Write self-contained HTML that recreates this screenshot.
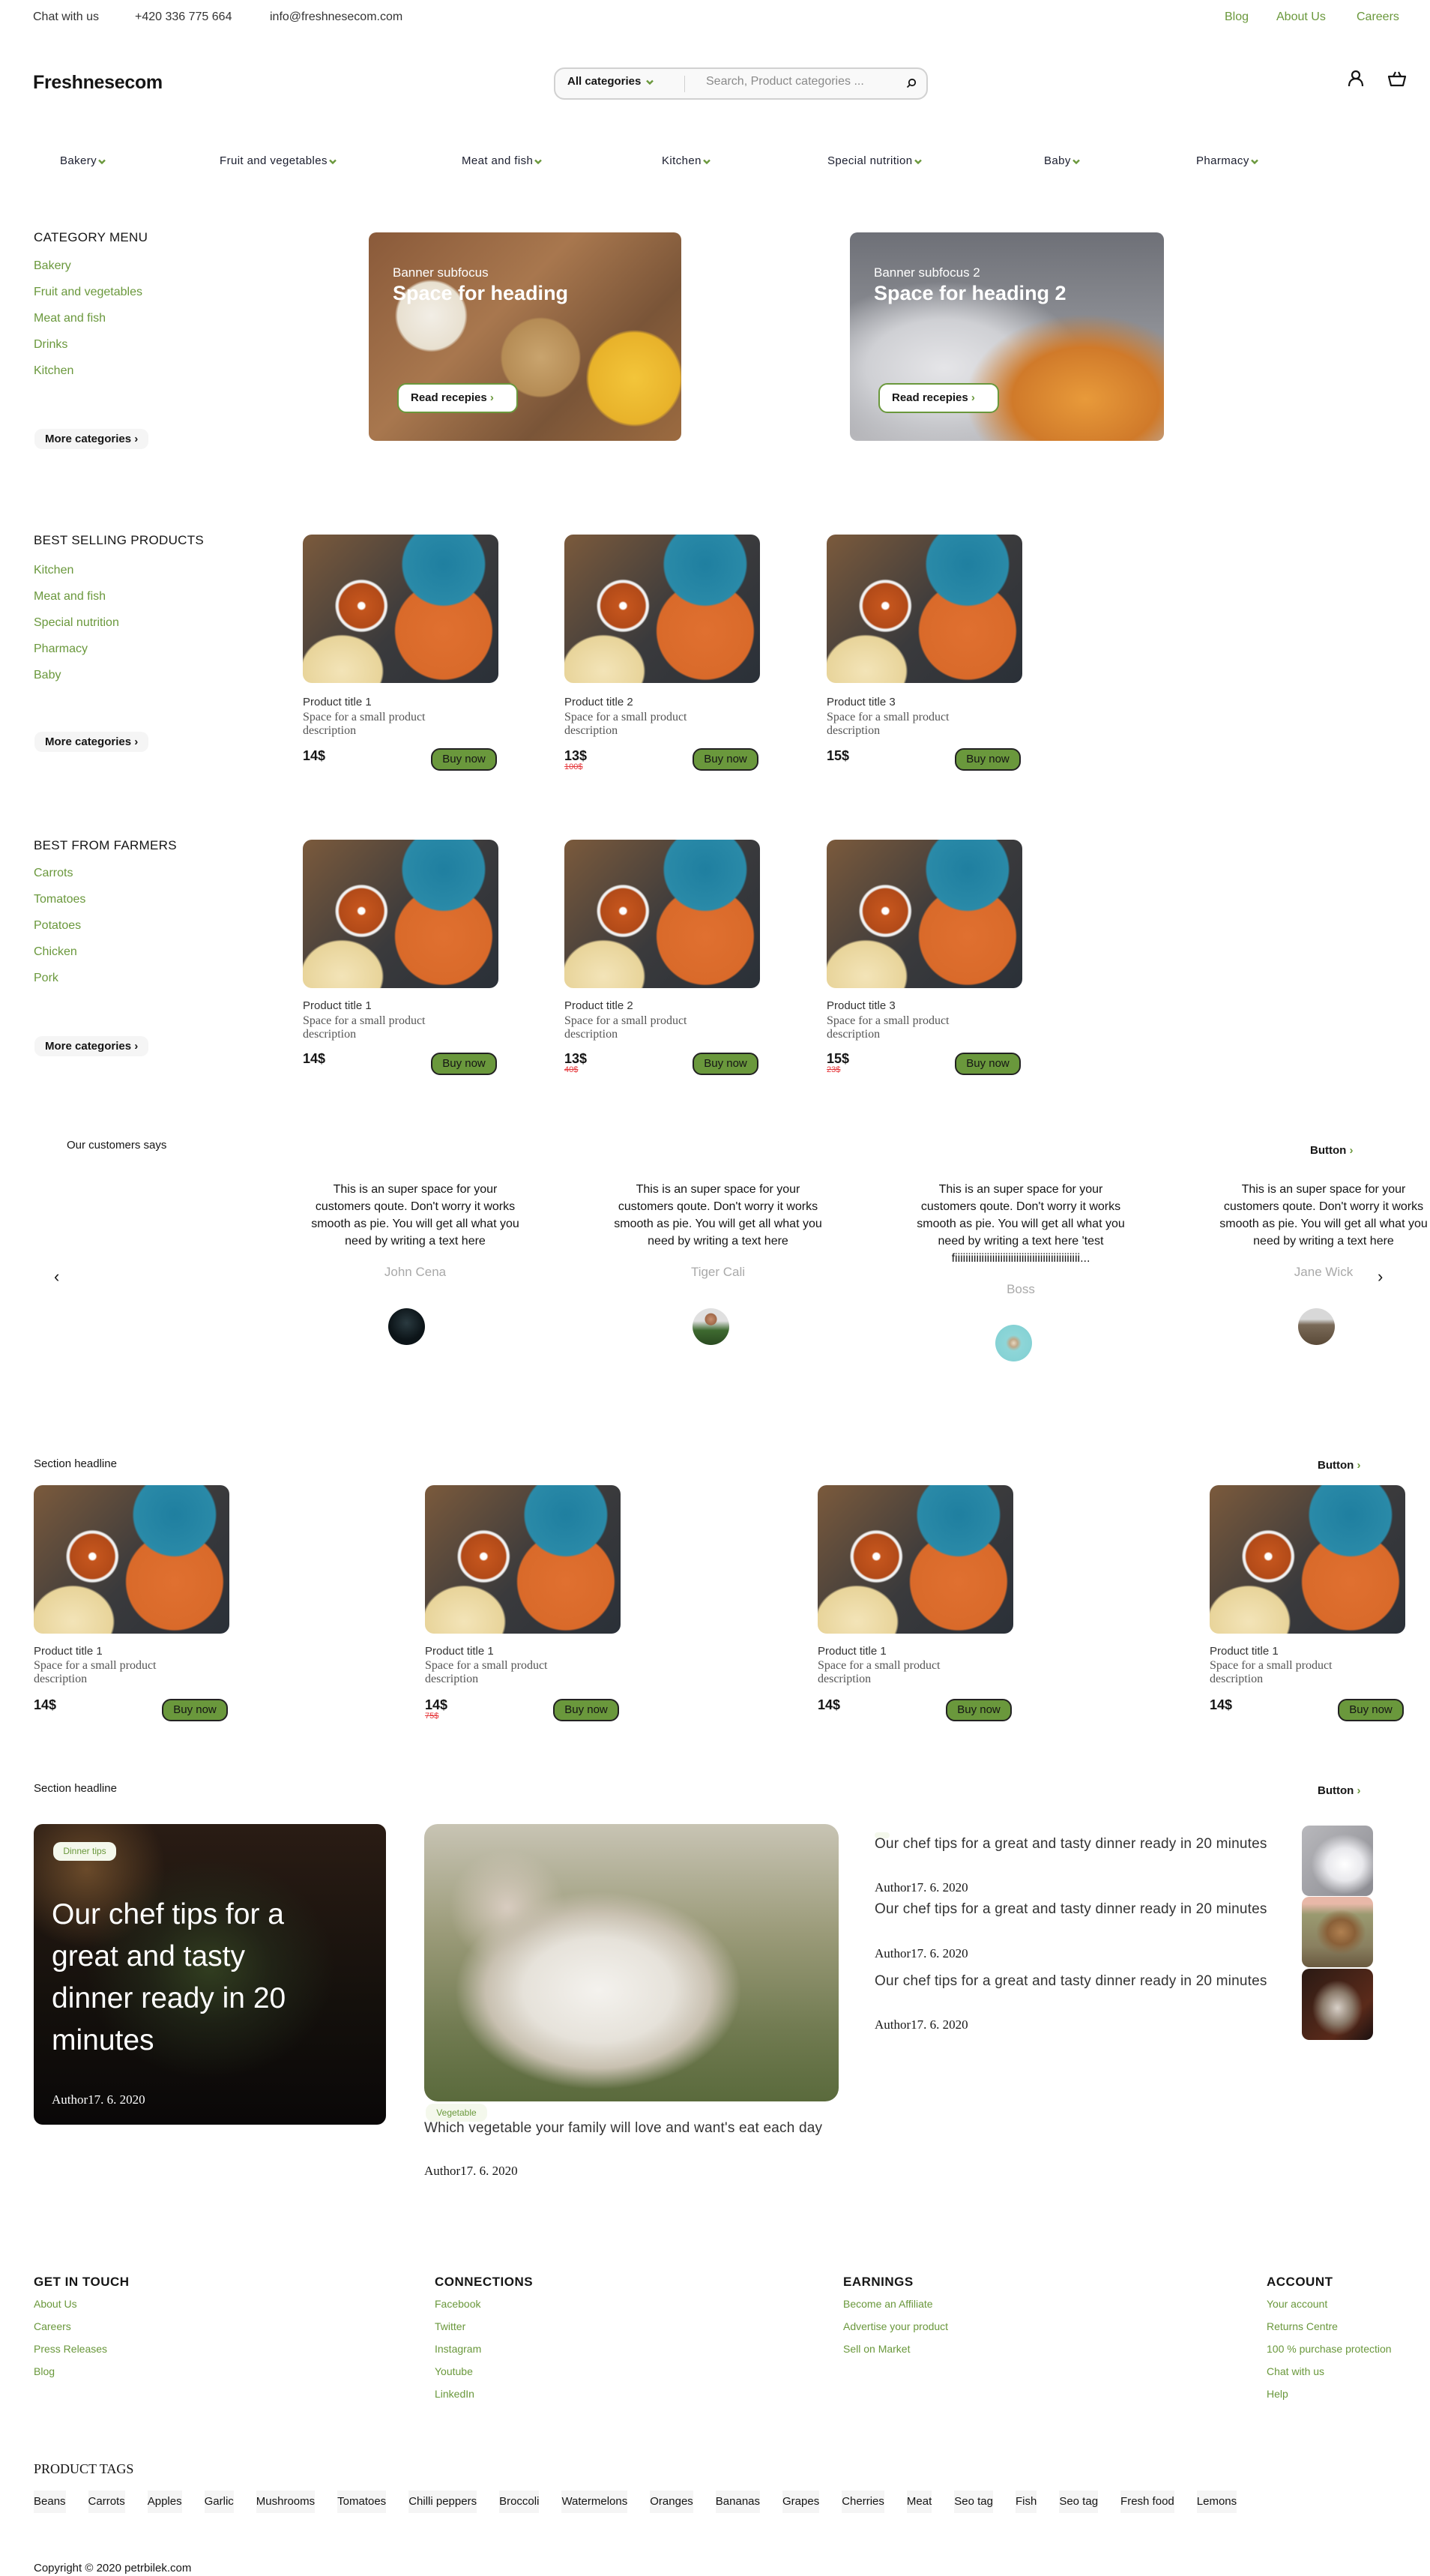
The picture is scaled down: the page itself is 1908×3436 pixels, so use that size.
<!DOCTYPE html>
<html><head><meta charset="utf-8">
<style>
*{margin:0;padding:0;box-sizing:border-box}
body{width:1908px;height:3436px;position:relative;background:#fff;font-family:"Liberation Sans",sans-serif;color:#151515;overflow:hidden}
.a{position:absolute;white-space:nowrap}
.g{color:#6a983c}
.cv{display:inline-block;width:10px;height:7px;margin-left:2px;vertical-align:middle}
.nav{font-size:15px;color:#1a1d2e;letter-spacing:.4px}
.cat{font-size:16px;color:#6a983c}
.ttl{font-size:17px;color:#151515;letter-spacing:.3px}
.more{background:#f5f5f5;border-radius:10px;font-size:15px;font-weight:bold;padding:0 14px;height:27px;line-height:27px}
.food{border-radius:12px;background:
radial-gradient(circle at 72% 20%,#1f7fa0 0,#2a8aa8 22%,transparent 23%),
radial-gradient(circle at 30% 48%,#fff 0,#fff 2%,#c4551d 3%,#b24a18 14%,#f0f0f0 15%,#f0f0f0 16%,transparent 17%),
radial-gradient(circle at 72% 65%,#e07030 0,#d96a2a 28%,transparent 29%),
radial-gradient(ellipse at 20% 92%,#f3e4b8 0,#e8d49a 18%,transparent 19%),
linear-gradient(135deg,#7b5a3c,#3a3a3c 55%,#2a3038)}
.pt{font-size:15px;color:#333}
.pd{font-family:"Liberation Serif",serif;font-size:16px;color:#555;line-height:18px;white-space:normal;width:230px}
.pr{font-size:18px;font-weight:bold}
.old{font-size:11px;color:#e5373b;text-decoration:line-through}
.buy{width:88px;height:30px;border:2px solid #222;background:#6a983c;border-radius:12px;font-size:15px;text-align:center;line-height:26px;color:#151515}
.q{font-size:16px;line-height:23px;text-align:center;width:290px;white-space:normal}
.nm{font-size:17px;color:#a9a9a9;text-align:center;width:290px}
.av{width:49px;height:49px;border-radius:50%}
.fh{font-size:17px;font-weight:bold;letter-spacing:.5px}
.fl{font-size:14px;color:#6a983c}
.tag{background:#f5f5f5;height:30px;line-height:30px;font-size:15px;color:#151515;display:inline-block;margin-right:30px}
.auth{font-family:"Liberation Serif",serif;font-size:17px}
.bt{font-size:19px;color:#333;letter-spacing:.2px}
</style></head><body>
<svg width="0" height="0" style="position:absolute"><defs><symbol id="cv" viewBox="0 0 10 7"><path d="M1 1.5L5 5.5L9 1.5" fill="none" stroke="#6a983c" stroke-width="2.4"/></symbol></defs></svg>

<div class="a" style="left:44px;top:14px;font-size:16px;color:#333">Chat with us</div>
<div class="a" style="left:180px;top:14px;font-size:16px;color:#333">+420 336 775 664</div>
<div class="a" style="left:360px;top:14px;font-size:16px;color:#333">info@freshnesecom.com</div>
<div class="a g" style="left:1634px;top:14px;font-size:16px">Blog</div>
<div class="a g" style="left:1703px;top:14px;font-size:16px">About Us</div>
<div class="a g" style="left:1810px;top:14px;font-size:16px">Careers</div>

<div class="a" style="left:44px;top:96px;font-size:25px;font-weight:bold;letter-spacing:-.3px">Freshnesecom</div>
<div class="a" style="left:739px;top:90px;width:499px;height:43px;border:2px solid #d1d1d1;border-radius:14px;background:#f9f9f9"></div>
<div class="a" style="left:757px;top:100px;font-size:15px;font-weight:bold">All categories <svg class="cv"><use href="#cv"/></svg></div>
<div class="a" style="left:913px;top:101px;width:1px;height:22px;background:#d1d1d1"></div>
<div class="a" style="left:942px;top:100px;font-size:16px;color:#8a8a8a">Search, Product categories ...</div>
<svg class="a" style="left:1209px;top:104px" width="14" height="14" viewBox="0 0 14 14"><circle cx="8" cy="6" r="4.2" fill="none" stroke="#151515" stroke-width="1.8"/><path d="M5 9L1.5 12.5" stroke="#151515" stroke-width="1.8"/></svg>
<svg class="a" style="left:1797px;top:93px" width="24" height="24" viewBox="0 0 24 24"><circle cx="12" cy="7" r="5" fill="none" stroke="#151515" stroke-width="2.2"/><path d="M3 22C3 15 7 12 12 12S21 15 21 22" fill="none" stroke="#151515" stroke-width="2.2"/></svg>
<svg class="a" style="left:1851px;top:93px" width="26" height="24" viewBox="0 0 26 24"><path d="M2 9H24L21 21H5Z" fill="none" stroke="#151515" stroke-width="2.2" stroke-linejoin="round"/><path d="M8 9L11 3M18 9L15 3" stroke="#151515" stroke-width="2.2"/></svg>

<div class="a nav" style="left:80px;top:206px">Bakery<svg class="cv"><use href="#cv"/></svg></div>
<div class="a nav" style="left:293px;top:206px">Fruit and vegetables<svg class="cv"><use href="#cv"/></svg></div>
<div class="a nav" style="left:616px;top:206px">Meat and fish<svg class="cv"><use href="#cv"/></svg></div>
<div class="a nav" style="left:883px;top:206px">Kitchen<svg class="cv"><use href="#cv"/></svg></div>
<div class="a nav" style="left:1104px;top:206px">Special nutrition<svg class="cv"><use href="#cv"/></svg></div>
<div class="a nav" style="left:1393px;top:206px">Baby<svg class="cv"><use href="#cv"/></svg></div>
<div class="a nav" style="left:1596px;top:206px">Pharmacy<svg class="cv"><use href="#cv"/></svg></div>

<div class="a ttl" style="left:45px;top:307px">CATEGORY MENU</div>
<div class="a cat" style="left:45px;top:346px">Bakery</div>
<div class="a cat" style="left:45px;top:381px">Fruit and vegetables</div>
<div class="a cat" style="left:45px;top:416px">Meat and fish</div>
<div class="a cat" style="left:45px;top:451px">Drinks</div>
<div class="a cat" style="left:45px;top:486px">Kitchen</div>
<div class="a more" style="left:46px;top:572px">More categories &#8250;</div>

<div class="a" style="left:492px;top:310px;width:417px;height:278px;border-radius:10px;background:radial-gradient(circle at 20% 40%,#f2eee6 0,#e8e0d0 12%,transparent 13%),radial-gradient(circle at 85% 70%,#f3c53a 0,#e8b22a 15%,transparent 16%),radial-gradient(circle at 55% 60%,#c9a46e 0,#b58c55 18%,transparent 19%),linear-gradient(135deg,#8a5a3a,#a8774e 40%,#7a5538 70%,#9c6b40)"></div>
<div class="a" style="left:524px;top:354px;font-size:17px;color:#fff">Banner subfocus</div>
<div class="a" style="left:524px;top:376px;font-size:27px;font-weight:bold;color:#fff">Space for heading</div>
<div class="a" style="left:530px;top:511px;width:161px;height:40px;border:2px solid #6a983c;border-radius:12px;background:#fff;font-size:15px;font-weight:bold;line-height:36px;padding-left:16px">Read recepies <span class="g">&#8250;</span></div>

<div class="a" style="left:1134px;top:310px;width:419px;height:278px;border-radius:10px;background:radial-gradient(ellipse at 75% 80%,#e89a3a 0,#d07a2a 22%,transparent 36%),radial-gradient(ellipse at 30% 65%,#e5e5e8 0,#cfd0d4 25%,transparent 45%),linear-gradient(180deg,#6e7077,#8c8e94 45%,#b8b8bc)"></div>
<div class="a" style="left:1166px;top:354px;font-size:17px;color:#fff">Banner subfocus 2</div>
<div class="a" style="left:1166px;top:376px;font-size:27px;font-weight:bold;color:#fff">Space for heading 2</div>
<div class="a" style="left:1172px;top:511px;width:161px;height:40px;border:2px solid #6a983c;border-radius:12px;background:#fff;font-size:15px;font-weight:bold;line-height:36px;padding-left:16px">Read recepies <span class="g">&#8250;</span></div>

<div class="a ttl" style="left:45px;top:711px">BEST SELLING PRODUCTS</div>
<div class="a cat" style="left:45px;top:752px">Kitchen</div>
<div class="a cat" style="left:45px;top:787px">Meat and fish</div>
<div class="a cat" style="left:45px;top:822px">Special nutrition</div>
<div class="a cat" style="left:45px;top:857px">Pharmacy</div>
<div class="a cat" style="left:45px;top:892px">Baby</div>
<div class="a more" style="left:46px;top:976px">More categories &#8250;</div>

<div class="a food" style="left:404px;top:713px;width:261px;height:198px"></div>
<div class="a pt" style="left:404px;top:928px">Product title 1</div>
<div class="a pd" style="left:404px;top:948px">Space for a small product description</div>
<div class="a pr" style="left:404px;top:998px">14$</div>
<div class="a buy" style="left:575px;top:998px">Buy now</div>

<div class="a food" style="left:753px;top:713px;width:261px;height:198px"></div>
<div class="a pt" style="left:753px;top:928px">Product title 2</div>
<div class="a pd" style="left:753px;top:948px">Space for a small product description</div>
<div class="a pr" style="left:753px;top:998px">13$</div>
<div class="a old" style="left:753px;top:1017px">100$</div>
<div class="a buy" style="left:924px;top:998px">Buy now</div>

<div class="a food" style="left:1103px;top:713px;width:261px;height:198px"></div>
<div class="a pt" style="left:1103px;top:928px">Product title 3</div>
<div class="a pd" style="left:1103px;top:948px">Space for a small product description</div>
<div class="a pr" style="left:1103px;top:998px">15$</div>
<div class="a buy" style="left:1274px;top:998px">Buy now</div>

<div class="a ttl" style="left:45px;top:1118px">BEST FROM FARMERS</div>
<div class="a cat" style="left:45px;top:1156px">Carrots</div>
<div class="a cat" style="left:45px;top:1191px">Tomatoes</div>
<div class="a cat" style="left:45px;top:1226px">Potatoes</div>
<div class="a cat" style="left:45px;top:1261px">Chicken</div>
<div class="a cat" style="left:45px;top:1296px">Pork</div>
<div class="a more" style="left:46px;top:1382px">More categories &#8250;</div>

<div class="a food" style="left:404px;top:1120px;width:261px;height:198px"></div>
<div class="a pt" style="left:404px;top:1333px">Product title 1</div>
<div class="a pd" style="left:404px;top:1353px">Space for a small product description</div>
<div class="a pr" style="left:404px;top:1402px">14$</div>
<div class="a buy" style="left:575px;top:1404px">Buy now</div>

<div class="a food" style="left:753px;top:1120px;width:261px;height:198px"></div>
<div class="a pt" style="left:753px;top:1333px">Product title 2</div>
<div class="a pd" style="left:753px;top:1353px">Space for a small product description</div>
<div class="a pr" style="left:753px;top:1402px">13$</div>
<div class="a old" style="left:753px;top:1421px">40$</div>
<div class="a buy" style="left:924px;top:1404px">Buy now</div>

<div class="a food" style="left:1103px;top:1120px;width:261px;height:198px"></div>
<div class="a pt" style="left:1103px;top:1333px">Product title 3</div>
<div class="a pd" style="left:1103px;top:1353px">Space for a small product description</div>
<div class="a pr" style="left:1103px;top:1402px">15$</div>
<div class="a old" style="left:1103px;top:1421px">23$</div>
<div class="a buy" style="left:1274px;top:1404px">Buy now</div>

<div class="a" style="left:89px;top:1519px;font-size:15px">Our customers says</div>
<div class="a" style="left:1748px;top:1526px;font-size:15px;font-weight:bold">Button <span class="g">&#8250;</span></div>
<div class="a" style="left:72px;top:1690px;font-size:22px">&#8249;</div>
<div class="a" style="left:1838px;top:1690px;font-size:22px">&#8250;</div>

<div class="a q" style="left:409px;top:1575px">This is an super space for your customers qoute. Don't worry it works smooth as pie. You will get all what you need by writing a text here</div>
<div class="a nm" style="left:409px;top:1687px">John Cena</div>
<div class="a av" style="left:518px;top:1745px;background:radial-gradient(circle at 50% 40%,#2a3a40,#0c1418 60%)"></div>

<div class="a q" style="left:813px;top:1575px">This is an super space for your customers qoute. Don't worry it works smooth as pie. You will get all what you need by writing a text here</div>
<div class="a nm" style="left:813px;top:1687px">Tiger Cali</div>
<div class="a av" style="left:924px;top:1745px;background:radial-gradient(circle at 50% 30%,#c89070 0,#a06848 18%,transparent 20%),linear-gradient(180deg,#e0e0e0 35%,#3e6a30 60%,#2a4a20)"></div>

<div class="a q" style="left:1217px;top:1575px;overflow:hidden">This is an super space for your customers qoute. Don't worry it works smooth as pie. You will get all what you need by writing a text here 'test fiiiiiiiiiiiiiiiiiiiiiiiiiiiiiiiiiiiiiiiiiiiiiii...</div>
<div class="a nm" style="left:1217px;top:1710px">Boss</div>
<div class="a av" style="left:1328px;top:1767px;background:radial-gradient(circle at 50% 50%,#e8d8c0 0,#c0a888 15%,#8ed6d8 30%,#7fcfd2)"></div>

<div class="a" style="left:1621px;top:1575px;width:287px;overflow:hidden"><div class="q">This is an super space for your customers qoute. Don't worry it works smooth as pie. You will get all what you need by writing a text here</div></div>
<div class="a nm" style="left:1621px;top:1687px">Jane Wick</div>
<div class="a av" style="left:1732px;top:1745px;background:linear-gradient(180deg,#d8d8d8 30%,#7a6a58 45%,#5a4a38)"></div>

<div class="a" style="left:45px;top:1944px;font-size:15px">Section headline</div>
<div class="a" style="left:1758px;top:1946px;font-size:15px;font-weight:bold">Button <span class="g">&#8250;</span></div>

<div class="a food" style="left:45px;top:1981px;width:261px;height:198px"></div>
<div class="a pt" style="left:45px;top:2194px">Product title 1</div>
<div class="a pd" style="left:45px;top:2213px">Space for a small product description</div>
<div class="a pr" style="left:45px;top:2264px">14$</div>
<div class="a buy" style="left:216px;top:2266px">Buy now</div>

<div class="a food" style="left:567px;top:1981px;width:261px;height:198px"></div>
<div class="a pt" style="left:567px;top:2194px">Product title 1</div>
<div class="a pd" style="left:567px;top:2213px">Space for a small product description</div>
<div class="a pr" style="left:567px;top:2264px">14$</div>
<div class="a old" style="left:567px;top:2283px">75$</div>
<div class="a buy" style="left:738px;top:2266px">Buy now</div>

<div class="a food" style="left:1091px;top:1981px;width:261px;height:198px"></div>
<div class="a pt" style="left:1091px;top:2194px">Product title 1</div>
<div class="a pd" style="left:1091px;top:2213px">Space for a small product description</div>
<div class="a pr" style="left:1091px;top:2264px">14$</div>
<div class="a buy" style="left:1262px;top:2266px">Buy now</div>

<div class="a food" style="left:1614px;top:1981px;width:261px;height:198px"></div>
<div class="a pt" style="left:1614px;top:2194px">Product title 1</div>
<div class="a pd" style="left:1614px;top:2213px">Space for a small product description</div>
<div class="a pr" style="left:1614px;top:2264px">14$</div>
<div class="a buy" style="left:1785px;top:2266px">Buy now</div>

<div class="a" style="left:45px;top:2377px;font-size:15px">Section headline</div>
<div class="a" style="left:1758px;top:2380px;font-size:15px;font-weight:bold">Button <span class="g">&#8250;</span></div>

<div class="a" style="left:45px;top:2433px;width:470px;height:401px;border-radius:12px;background:radial-gradient(ellipse at 50% 48%,rgba(60,80,40,.7) 0,rgba(40,50,30,.5) 25%,transparent 50%),radial-gradient(circle at 15% 15%,#6a4a2a 0,transparent 20%),linear-gradient(180deg,#2a1c14,#14100c 60%,#0a0808)"></div>
<div class="a" style="left:71px;top:2457px;width:84px;height:25px;background:#f4f8ec;border-radius:10px;font-size:12px;color:#6a983c;text-align:center;line-height:25px">Dinner tips</div>
<div class="a" style="left:69px;top:2526px;font-size:39px;line-height:56px;color:#fff;white-space:normal;width:345px">Our chef tips for a great and tasty dinner ready in 20 minutes</div>
<div class="a auth" style="left:69px;top:2791px;color:#fff">Author17. 6. 2020</div>

<div class="a" style="left:566px;top:2433px;width:553px;height:370px;border-radius:18px;background:radial-gradient(ellipse at 42% 60%,#f4f2ee 0,#e6e2da 22%,#c8c0b0 33%,transparent 42%),radial-gradient(circle at 20% 30%,#d8ccc0 0,transparent 15%),linear-gradient(180deg,#c8c4b4,#9a9a78 40%,#707a50 75%,#5a6a3c)"></div>
<div class="a" style="left:568px;top:2806px;width:82px;height:24px;background:#f4f8ec;border-radius:10px;font-size:12px;color:#6a983c;text-align:center;line-height:24px">Vegetable</div>
<div class="a bt" style="left:566px;top:2828px">Which vegetable your family will love and want's eat each day</div>
<div class="a auth" style="left:566px;top:2886px">Author17. 6. 2020</div>

<div class="a" style="left:1167px;top:2444px;width:20px;height:8px;background:#f4f8ec;border-radius:4px"></div>
<div class="a bt" style="left:1167px;top:2449px">Our chef tips for a great and tasty dinner ready in 20 minutes</div>
<div class="a auth" style="left:1167px;top:2508px">Author17. 6. 2020</div>
<div class="a bt" style="left:1167px;top:2536px">Our chef tips for a great and tasty dinner ready in 20 minutes</div>
<div class="a auth" style="left:1167px;top:2596px">Author17. 6. 2020</div>
<div class="a bt" style="left:1167px;top:2632px">Our chef tips for a great and tasty dinner ready in 20 minutes</div>
<div class="a auth" style="left:1167px;top:2691px">Author17. 6. 2020</div>
<div class="a" style="left:1737px;top:2435px;width:95px;height:94px;border-radius:10px;background:radial-gradient(ellipse at 60% 55%,#fff 0,#e8e8ec 30%,transparent 55%),linear-gradient(135deg,#b8b8bc,#8a8a90)"></div>
<div class="a" style="left:1737px;top:2530px;width:95px;height:94px;border-radius:10px;background:radial-gradient(ellipse at 55% 50%,#b08050 0,#8a6038 25%,transparent 45%),linear-gradient(180deg,#e8b8a8 10%,#9a9a70 25%,#8a8060 70%,#6a5a40)"></div>
<div class="a" style="left:1737px;top:2626px;width:95px;height:95px;border-radius:10px;background:radial-gradient(ellipse at 50% 55%,#d8d0c8 0,#8a7a6a 30%,transparent 50%),linear-gradient(135deg,#2a1a14,#5a2a1a 70%,#1a1010)"></div>

<div class="a fh" style="left:45px;top:3034px">GET IN TOUCH</div>
<div class="a fl" style="left:45px;top:3065px">About Us</div>
<div class="a fl" style="left:45px;top:3095px">Careers</div>
<div class="a fl" style="left:45px;top:3125px">Press Releases</div>
<div class="a fl" style="left:45px;top:3155px">Blog</div>

<div class="a fh" style="left:580px;top:3034px">CONNECTIONS</div>
<div class="a fl" style="left:580px;top:3065px">Facebook</div>
<div class="a fl" style="left:580px;top:3095px">Twitter</div>
<div class="a fl" style="left:580px;top:3125px">Instagram</div>
<div class="a fl" style="left:580px;top:3155px">Youtube</div>
<div class="a fl" style="left:580px;top:3185px">LinkedIn</div>

<div class="a fh" style="left:1125px;top:3034px">EARNINGS</div>
<div class="a fl" style="left:1125px;top:3065px">Become an Affiliate</div>
<div class="a fl" style="left:1125px;top:3095px">Advertise your product</div>
<div class="a fl" style="left:1125px;top:3125px">Sell on Market</div>

<div class="a fh" style="left:1690px;top:3034px">ACCOUNT</div>
<div class="a fl" style="left:1690px;top:3065px">Your account</div>
<div class="a fl" style="left:1690px;top:3095px">Returns Centre</div>
<div class="a fl" style="left:1690px;top:3125px">100 % purchase protection</div>
<div class="a fl" style="left:1690px;top:3155px">Chat with us</div>
<div class="a fl" style="left:1690px;top:3185px">Help</div>

<div class="a" style="left:45px;top:3283px;font-family:'Liberation Serif',serif;font-size:18px">PRODUCT TAGS</div>
<div class="a" style="left:45px;top:3322px"><span class="tag">Beans</span><span class="tag">Carrots</span><span class="tag">Apples</span><span class="tag">Garlic</span><span class="tag">Mushrooms</span><span class="tag">Tomatoes</span><span class="tag">Chilli peppers</span><span class="tag">Broccoli</span><span class="tag">Watermelons</span><span class="tag">Oranges</span><span class="tag">Bananas</span><span class="tag">Grapes</span><span class="tag">Cherries</span><span class="tag">Meat</span><span class="tag">Seo tag</span><span class="tag">Fish</span><span class="tag">Seo tag</span><span class="tag">Fresh food</span><span class="tag">Lemons</span></div>

<div class="a" style="left:45px;top:3417px;font-size:15px;color:#151515">Copyright © 2020 petrbilek.com</div>
</body></html>
